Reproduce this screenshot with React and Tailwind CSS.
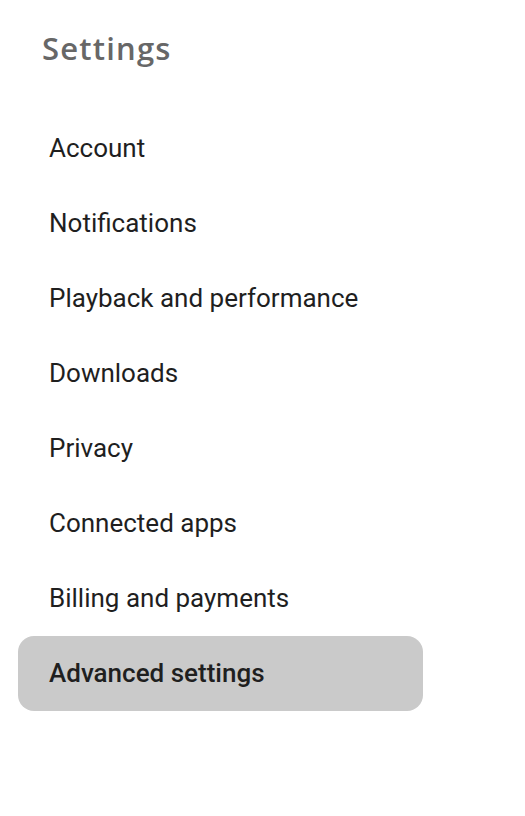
export default function App() {
  const items = [
    "Account",
    "Notifications",
    "Playback and performance",
    "Downloads",
    "Privacy",
    "Connected apps",
    "Billing and payments",
    "Advanced settings",
  ];
  const active = "Advanced settings";
  return (
    <div className="w-[525px] h-[816px] bg-white pl-[18px]">
      <div
        className="pt-[28px] mb-[43px] ml-[24px] leading-[40px] text-[31px] font-semibold tracking-[1.2px] text-[#676767]"
        style={{ fontFamily: '"Open Sans", "Noto Sans", sans-serif' }}
      >
        Settings
      </div>
      <nav className="flex flex-col w-[405px]">
        {items.map((it) => (
          <div
            key={it}
            className={
              it === active
                ? "h-[75px] flex items-center pl-[31px] rounded-[16px] bg-[#cacaca] text-[26px] font-medium text-[#1f1f1f]"
                : "h-[75px] flex items-center pl-[31px] text-[26px] text-[#1f1f1f]"
            }
            style={{ fontFamily: 'Roboto, "Liberation Sans", sans-serif' }}
          >
            {it}
          </div>
        ))}
      </nav>
    </div>
  );
}
